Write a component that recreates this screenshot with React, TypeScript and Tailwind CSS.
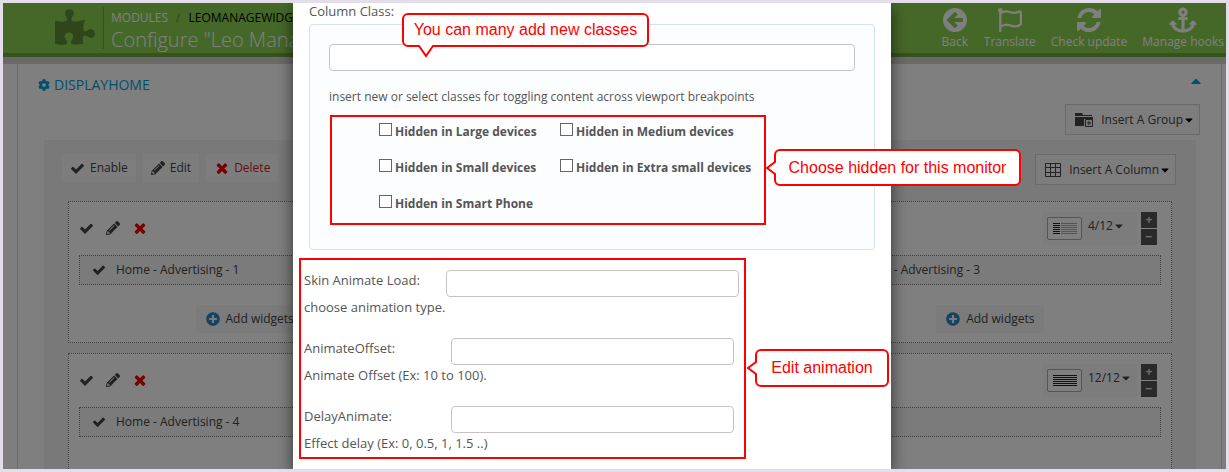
import type { ReactNode } from "react";
import {
  FaAnchor,
  FaCaretDown,
  FaCaretUp,
  FaCog,
  FaPencilAlt,
  FaPlusCircle,
  FaPuzzlePiece,
  FaRegFlag,
} from "react-icons/fa";

const paths = {
  check:
    "M1671 566q0 40-28 68l-724 724-136 136q-28 28-68 28t-68-28l-136-136-362-362q-28-28-28-68t28-68l136-136q28-28 68-28t68 28l294 295 656-657q28-28 68-28t68 28l136 136q28 28 28 68z",
  times:
    "M1490 1322q0 40-28 68l-136 136q-28 28-68 28t-68-28l-294-294-294 294q-28 28-68 28t-68-28l-136-136q-28-28-28-68t28-68l294-294-294-294q-28-28-28-68t28-68l136-136q28-28 68-28t68 28l294 294 294-294q28-28 68-28t68 28l136 136q28 28 28 68t-28 68l-294 294 294 294q28 28 28 68z",
  refresh:
    "M1639 1056q0 5-1 7-64 268-268 434.5t-478 166.5q-146 0-282.5-55t-243.5-157l-129 129q-19 19-45 19t-45-19-19-45v-448q0-26 19-45t45-19h448q26 0 45 19t19 45-19 45l-137 137q71 66 161 102t187 36q134 0 250-65t186-179q11-17 53-117 8-23 30-23h192q13 0 22.5 9.5t9.5 22.5zm25-800v448q0 26-19 45t-45 19h-448q-26 0-45-19t-19-45 19-45l138-138q-148-137-349-137-134 0-250 65t-186 179q-11 17-53 117-8 23-30 23h-199q-13 0-22.5-9.5t-9.5-22.5v-7q65-268 270-434.5t480-166.5q146 0 284 55.5t245 156.5l130-129q19-19 45-19t45 19 19 45z",
  back: "M1408 960v-128q0-26-19-45t-45-19h-502l189-189q19-19 19-45t-19-45l-91-91q-18-18-45-18t-45 18l-362 362-91 91q-18 18-18 45t18 45l91 91 362 362q18 18 45 18t45-18l91-91q18-18 18-45t-18-45l-189-189h502q26 0 45-19t19-45zm256-64q0 209-103 385.5t-279.5 279.5-385.5 103-385.5-103-279.5-279.5-103-385.5 103-385.5 279.5-279.5 385.5-103 385.5 103 279.5 279.5 103 385.5z",
};

function Glyph({ name, className }: { name: keyof typeof paths; className?: string }) {
  return (
    <svg viewBox="0 0 1792 1792" fill="currentColor" className={className} aria-hidden="true">
      <path d={paths[name]} />
    </svg>
  );
}

function FolderPlusIcon() {
  return (
    <svg viewBox="0 0 18 15" className="h-[15px] w-[18px]" aria-hidden="true">
      <path d="M0 1h7l1 2h9v1H0z" fill="#444" />
      <path d="M0 5h18v9H0z" fill="#444" />
      <path d="M9 7h9v8H9z" fill="#eee" />
      <path d="M10.500 7.500h7v7h-7z" fill="none" stroke="#444" />
      <path d="M14 9v4M12 11h4" stroke="#444" />
    </svg>
  );
}

function TableIcon() {
  return (
    <svg viewBox="0 0 16 14" className="h-[14px] w-4" fill="none" stroke="#444" aria-hidden="true">
      <path d="M.5.5h15v13H.5zM.5 4.500h15M.5 9.500h15M5.500 0v14M10.500 0v14" />
    </svg>
  );
}

function LinesIcon({ split }: { split?: boolean }) {
  const rows = [0, 2, 4, 6, 8, 10];
  return (
    <svg viewBox="0 0 24 11" className="h-[11px] w-6" aria-hidden="true">
      {rows.map((y) => (
        <g key={y}>
          <rect x="0" y={y} width={split ? 7 : 24} height="1" fill="#222" />
          {split && <rect x="8" y={y} width="16" height="1" fill="#aaa" />}
        </g>
      ))}
    </svg>
  );
}

function HeaderAction({ icon, label }: { icon: ReactNode; label: string }) {
  return (
    <a href="#" className="flex flex-col items-center text-xs text-white">
      <span className="flex h-7 items-center">{icon}</span>
      {label}
    </a>
  );
}

function PageHeader() {
  return (
    <header className="flex h-[54px] shrink-0 justify-between border-b-4 border-[#6ca43c] bg-[#8ad052]">
      <div className="flex pl-[52px]">
        <FaPuzzlePiece className="mt-1 size-10 text-[#5c8c34]" />
        <div className="my-1 ml-2 border-l border-[#6ca43c] pt-[3px] pl-[7px] whitespace-nowrap">
          <nav className="flex gap-2 text-xs text-black">
            <a href="#" className="text-white">MODULES</a>
            <span className="text-[#5c8c34]">/</span>
            <a href="#">LEOMANAGEWIDGETS</a>
          </nav>
          <h1 className="text-xl leading-7 font-light text-white">Configure "Leo Manage Widgets"</h1>
        </div>
      </div>
      <div className="flex gap-[15px] pt-[3px] pr-[2px]">
        <HeaderAction label="Back" icon={<Glyph name="back" className="size-7" />} />
        <HeaderAction label="Translate" icon={<FaRegFlag className="size-6" />} />
        <HeaderAction label="Check update" icon={<Glyph name="refresh" className="size-7" />} />
        <HeaderAction label="Manage hooks" icon={<FaAnchor className="size-7" />} />
      </div>
    </header>
  );
}

function InsertButton({ icon, label }: { icon: ReactNode; label: string }) {
  return (
    <button className="flex h-[31px] items-center gap-2 border border-[#d4d4d4] bg-[#fafafa] pr-1 pl-[9px] text-xs">
      {icon}
      <span className="flex items-center">
        {label}
        <FaCaretDown className="size-3 text-black" />
      </span>
    </button>
  );
}

function WidgetBar({ name }: { name: string }) {
  return (
    <div className="flex h-[30px] items-center gap-[10px] border border-dotted border-[#888] bg-[#f6f6f6] px-3 text-xs">
      <Glyph name="check" className="size-[14px]" />
      {name}
    </div>
  );
}

function SizeControl({ size, split }: { size: string; split?: boolean }) {
  return (
    <div className="flex gap-1 pr-1">
      <div className="flex w-[94px] items-center gap-1 bg-[#f8f8f8] pl-1 text-xs">
        <span className="flex h-[23px] w-[35px] items-center justify-center rounded-xs border border-[#aaa] bg-white">
          <LinesIcon split={split} />
        </span>
        <button className="flex items-center pb-1 pl-[2px]">
          {size}
          <FaCaretDown className="size-3" />
        </button>
      </div>
      <div className="flex flex-col gap-px text-xs leading-4 font-bold text-[#ddd]">
        <button aria-label="Wider" className="h-4 w-4 bg-[#555]">+</button>
        <button aria-label="Narrower" className="h-4 w-4 bg-[#555]">−</button>
      </div>
    </div>
  );
}

type ColumnProps = { widget: string; control?: ReactNode; children?: ReactNode };

function Column({ widget, control, children }: ColumnProps) {
  return (
    <section className="h-[142px] border border-dotted border-[#888] bg-white px-[10px] pt-[9px]">
      <div className="mb-[10px] flex h-[34px] items-center justify-between">
        <div className="flex items-center gap-3">
          <button aria-label="Enable"><Glyph name="check" className="size-[15px]" /></button>
          <button aria-label="Edit"><FaPencilAlt className="size-[14px]" /></button>
          <button aria-label="Delete" className="text-[#f00000]"><Glyph name="times" className="size-4" /></button>
        </div>
        {control}
      </div>
      <WidgetBar name={widget} />
      {children}
    </section>
  );
}

function AddWidgets() {
  return (
    <button className="mx-auto mt-5 flex h-7 items-center gap-[6px] bg-[#f6f6f6] px-[10px] text-xs">
      <FaPlusCircle className="size-[14px] text-[#2a86c4]" />
      Add widgets
    </button>
  );
}

function HomePanel() {
  return (
    <main className="mr-1 ml-[14px] flex-1 border-x border-[#d8d8d8] bg-white pr-[21px] pl-5 text-[#444]">
      <div className="flex h-[41px] items-center justify-between text-sm text-[#00a0e0]">
        <h2 className="flex items-center gap-1">
          <FaCog className="size-3" />
          DISPLAYHOME
        </h2>
        <FaCaretUp className="-mr-1 mb-2 size-4" />
      </div>
      <div className="-mt-px flex justify-end">
        <InsertButton icon={<FolderPlusIcon />} label="Insert A Group" />
      </div>
      <div className="mt-[5px] mr-1 ml-[6px] h-96 bg-[#f3f3f3] px-6 pt-[14px]">
        <div className="-mr-1 -ml-[6px] flex justify-between">
          <div className="flex gap-[7px] text-xs">
            <button className="flex h-7 items-center gap-[5px] bg-[#fafafa] px-2">
              <Glyph name="check" className="size-[15px]" />
              Enable
            </button>
            <button className="flex h-7 items-center gap-[5px] bg-[#fafafa] px-2">
              <FaPencilAlt className="size-[14px]" />
              Edit
            </button>
            <button className="flex h-7 items-center gap-1 bg-[#fafafa] px-2 text-[#d02020]">
              <Glyph name="times" className="size-4 text-[#f00000]" />
              Delete
            </button>
          </div>
          <InsertButton icon={<TableIcon />} label="Insert A Column" />
        </div>
        <div className="mt-4 grid grid-cols-3 gap-[7px]">
          <Column widget="Home - Advertising - 1"><AddWidgets /></Column>
          <Column widget="Home - Advertising - 2"><AddWidgets /></Column>
          <Column widget="Home - Advertising - 3" control={<SizeControl size="4/12" split />}>
            <AddWidgets />
          </Column>
        </div>
        <div className="mt-[10px]">
          <Column widget="Home - Advertising - 4" control={<SizeControl size="12/12" />} />
        </div>
      </div>
    </main>
  );
}

function Callout({ tail, className, children }: { tail: "left" | "bottom"; className: string; children: ReactNode }) {
  return (
    <div
      className={`absolute z-10 flex items-center justify-center rounded-md border-2 border-[#f00] bg-white font-['Liberation_Sans',sans-serif] text-base whitespace-nowrap text-[#f00] ${className}`}
    >
      {children}
      {tail === "left" ? (
        <svg viewBox="0 0 11 16" className="absolute top-[9px] -left-[10px] h-4 w-[11px]" aria-hidden="true">
          <path d="M11 1L9 2L1 8l8 6l2 1z" fill="#fff" />
          <path d="M9 1v1L1 8l8 6v1" fill="none" stroke="#f00" strokeWidth="2" />
        </svg>
      ) : (
        <svg viewBox="0 0 18 13" className="absolute top-full left-[13px] h-[13px] w-[18px]" aria-hidden="true">
          <path d="M1 0h16L9 11z" fill="#fff" />
          <path d="M1 1h1l7 10l7-10h1" fill="none" stroke="#f00" strokeWidth="2" />
        </svg>
      )}
    </div>
  );
}

const devices = [
  "Hidden in Large devices",
  "Hidden in Medium devices",
  "Hidden in Small devices",
  "Hidden in Extra small devices",
  "Hidden in Smart Phone",
];

const animations = [
  { id: "skin", label: "Skin Animate Load:", hint: "choose animation type.", box: "w-[293px] mr-0" },
  { id: "offset", label: "AnimateOffset:", hint: "Animate Offset (Ex: 10 to 100).", box: "w-[283px] mr-[5px]" },
  { id: "delay", label: "DelayAnimate:", hint: "Effect delay (Ex: 0, 0.5, 1, 1.5 ..)", box: "w-[283px] mr-[5px]" },
];

function ColumnDialog() {
  return (
    <div
      role="dialog"
      aria-label="Column settings"
      className="h-full w-full max-w-[598px] bg-white text-[#555] shadow-[0_5px_15px_rgba(0,0,0,0.6)]"
    >
      <label htmlFor="column-class" className="block pl-4 text-[13px] leading-4">Column Class:</label>
      <div className="relative mx-4 mt-[5px] h-[226px] rounded-sm border border-[#d3e3f5] bg-[#fbfdff] px-[19px] pt-[19px]">
        <input id="column-class" type="text" className="block h-[27px] w-full rounded-sm border border-[#c4c4c4] bg-white px-2" />
        <Callout tail="bottom" className="-top-3 left-[92px] h-[34px] w-[247px]">
          You can many add new classes
        </Callout>
        <p className="mt-4 text-xs leading-5">insert new or select classes for toggling content across viewport breakpoints</p>
        <div className="relative mt-2 ml-px h-[110px] w-[436px] border-2 border-[#f00] pt-[2px] pl-[47px]">
          <div className="grid grid-cols-[181px_1fr]">
            {devices.map((device) => (
              <label key={device} className="flex h-9 items-start gap-[3px] pt-1 text-xs leading-[18px] font-bold">
                <input type="checkbox" className="size-[13px] shrink-0 appearance-none border border-[#666] bg-white" />
                {device}
              </label>
            ))}
          </div>
          <Callout tail="left" className="top-8 left-[442px] h-[37px] w-[247px]">
            Choose hidden for this monitor
          </Callout>
        </div>
      </div>
      <div className="relative mt-2 ml-[6px] h-[201px] w-[447px] border-2 border-[#f00] pt-[10px] pr-[5px] pl-[3px] text-[13px]">
        {animations.map(({ id, label, hint, box }) => (
          <div key={id} className="mb-[14px]">
            <div className="flex h-[27px] justify-between">
              <label htmlFor={id} className="leading-5">{label}</label>
              <input id={id} type="text" className={`h-[27px] rounded-sm border border-[#c4c4c4] bg-white px-2 ${box}`} />
            </div>
            <p className="h-[27px] leading-5">{hint}</p>
          </div>
        ))}
        <Callout tail="left" className="top-[89px] left-[454px] h-[38px] w-[134px]">
          Edit animation
        </Callout>
      </div>
    </div>
  );
}

export default function App() {
  return (
    <div className="relative flex h-screen flex-col overflow-hidden border-3 border-[#e4deeb] bg-[#fcfcfc] font-['Open_Sans',sans-serif]">
      <PageHeader />
      <div className="h-[7px] shrink-0 bg-[#d8d4d2]" />
      <HomePanel />
      <div className="absolute inset-0 flex justify-center bg-black/50 pr-[45px]">
        <ColumnDialog />
      </div>
    </div>
  );
}
